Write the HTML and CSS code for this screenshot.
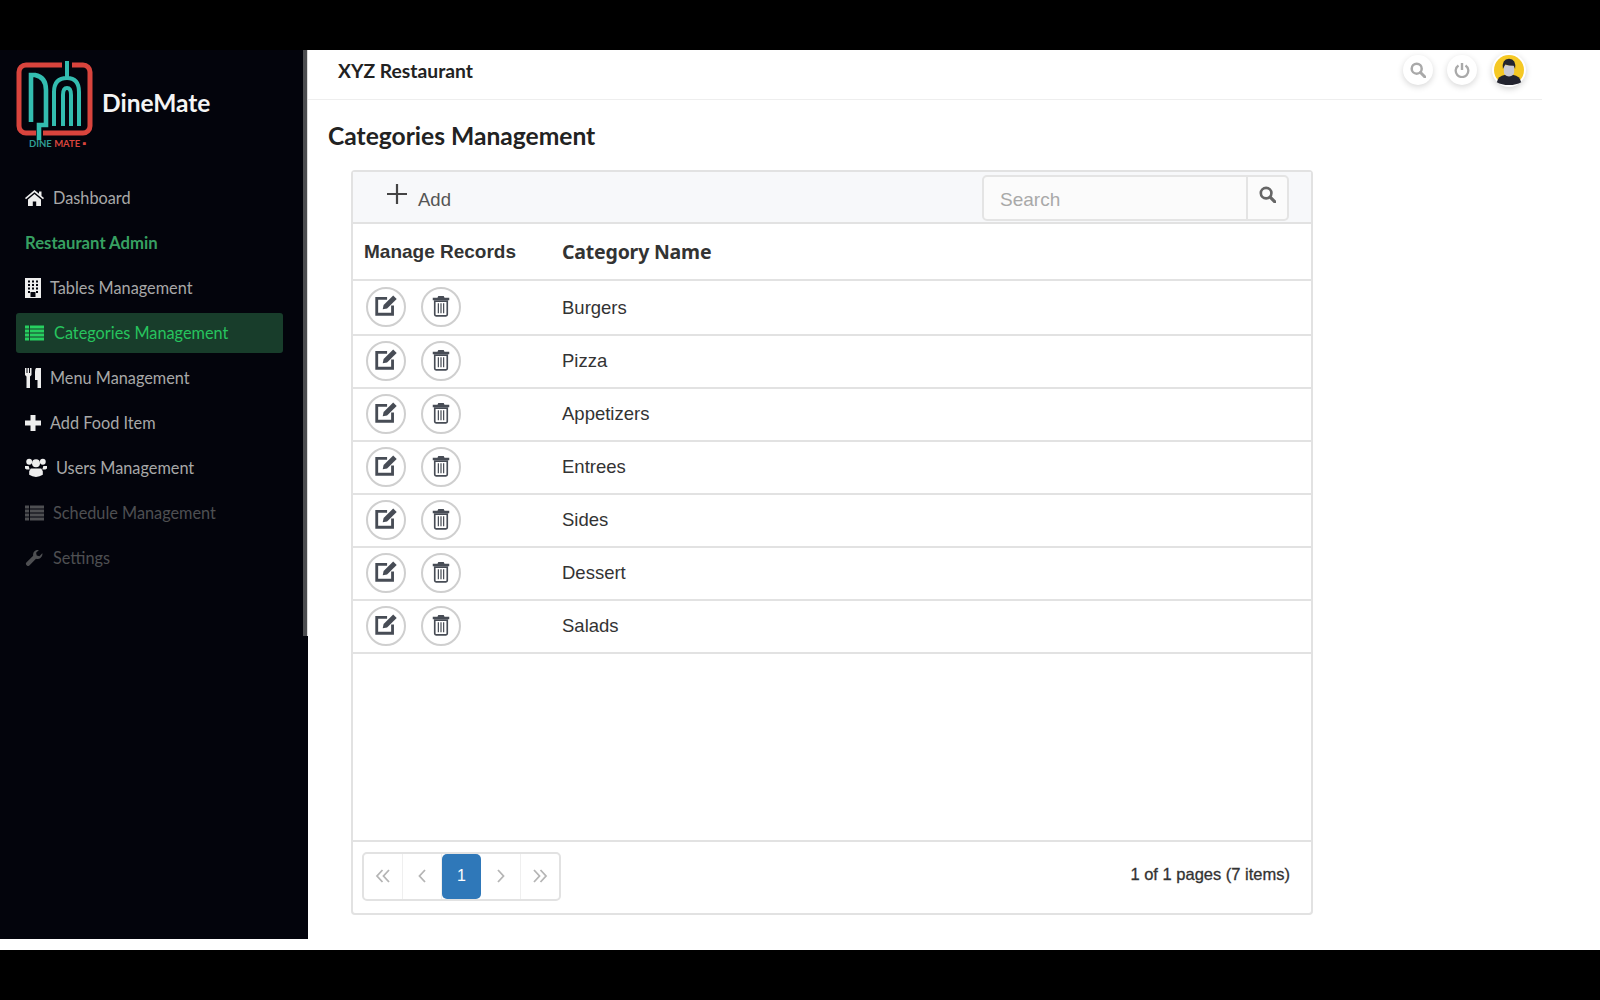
FILE: index.html
```html
<!DOCTYPE html>
<html lang="en">
<head>
<meta charset="utf-8">
<title>Categories Management</title>
<link rel="stylesheet" href="styles.css">
</head>
<body>
<svg class="defs" aria-hidden="true">
  <defs>
    <symbol id="i-edit" viewBox="0 0 22 22">
      <path d="M17 11.5V19.5H2.500V5H12" fill="none" stroke="currentColor" stroke-width="2.600"/>
      <path d="M8 15l.8-4 8.800-8.800 3.200 3.200-8.800 8.800z" fill="currentColor"/>
    </symbol>
    <symbol id="i-trash" viewBox="0 0 16 20">
      <path d="M5.500 1h5l.7 1.600H15.500v2.200H.5V2.600h4.300z" fill="currentColor"/>
      <path d="M2.300 5.600h11.400v12.200a1.200 1.200 0 0 1-1.200 1.200H3.500a1.200 1.200 0 0 1-1.200-1.200z" fill="none" stroke="currentColor" stroke-width="1.500"/>
      <path d="M5.600 7.500v9M8 7.500v9M10.400 7.500v9" stroke="currentColor" stroke-width="1.100"/>
    </symbol>
    <symbol id="i-list" viewBox="0 0 19 15">
      <path d="M0 0h4v3H0zM5 0h14v3H5zM0 4h4v3H0zM5 4h14v3H5zM0 8h4v3H0zM5 8h14v3H5zM0 12h4v3H0zM5 12h14v3H5z" fill="currentColor"/>
    </symbol>
    <symbol id="i-search" viewBox="0 0 16 16">
      <circle cx="6.700" cy="6.700" r="5" fill="none" stroke="currentColor" stroke-width="2.500"/>
      <path d="M10.500 10.500L15 15" stroke="currentColor" stroke-width="3" stroke-linecap="round"/>
    </symbol>
  </defs>
</svg>
<div class="band"></div>
<div class="app">
  <aside class="sidebar">
    <span class="rail"></span>
    <div class="brand">
      <svg class="logo" viewBox="16 10 80 88">
        <path d="M62 15H26a7 7 0 0 0-7 7V76a7 7 0 0 0 7 7H36M72 15H83a7 7 0 0 1 7 7V76a7 7 0 0 1-7 7H43" fill="none" stroke="#d9443d" stroke-width="5"/>
        <path d="M31 72V25H35Q46 27 46 40V75H39V90" fill="none" stroke="#33bdb0" stroke-width="4.600"/>
        <path d="M67 11V28M54 76V42Q54 28 67 28Q79 28 79 42V76M63 76V45Q63 38 67 38Q71 38 71 45V76" fill="none" stroke="#33bdb0" stroke-width="4"/>
        <text x="29" y="97" class="logo-text"><tspan fill="#2f9d94">DINE </tspan><tspan fill="#d9443d">MATE ▪</tspan></text>
      </svg>
      <span class="brand-name">DineMate</span>
    </div>
    <ul class="nav">
      <li class="nav-item"><a class="nav-link">
        <svg class="ic ic-19" viewBox="0 0 19 16"><path d="M9.500 0L14 3.800V1.500h2.500v4.400L19 8l-1 1.200-8.500-7-8.500 7L0 8zM3 9.500l6.500-5.400L16 9.500V16h-4.800v-4.500H7.800V16H3z" fill="currentColor"/></svg>
        <span>Dashboard</span></a></li>
      <li class="nav-item nav-heading"><span>Restaurant Admin</span></li>
      <li class="nav-item"><a class="nav-link">
        <svg class="ic ic-16" viewBox="0 0 16 20"><path fill-rule="evenodd" d="M0 0h16v20H0zM3 2.500v2h2v-2zM7 2.500v2h2v-2zM11 2.500v2h2v-2zM3 6v2h2V6zM7 6v2h2V6zM11 6v2h2V6zM3 9.500v2h2v-2zM7 9.500v2h2v-2zM11 9.500v2h2v-2zM3 13v2h2v-2zM11 13v2h2v-2zM5.500 14v5h5v-5z" fill="currentColor"/></svg>
        <span>Tables Management</span></a></li>
      <li class="nav-item"><a class="nav-link is-active">
        <svg class="ic ic-19"><use href="#i-list"/></svg>
        <span>Categories Management</span></a></li>
      <li class="nav-item"><a class="nav-link">
        <svg class="ic ic-16" viewBox="0 0 16 20"><path d="M0 0h1.500v5h1V0H4v5h1V0h1.500v7L5 8.500V20H1.500V8.500L0 7zM11 0h5v20h-3.500v-8H10V4q0-3 1-4z" fill="currentColor"/></svg>
        <span>Menu Management</span></a></li>
      <li class="nav-item"><a class="nav-link">
        <svg class="ic ic-16" viewBox="0 0 16 16"><path d="M5.500 0h5v5.500H16v5h-5.500V16h-5v-5.500H0v-5h5.500z" fill="currentColor"/></svg>
        <span>Add Food Item</span></a></li>
      <li class="nav-item"><a class="nav-link">
        <svg class="ic ic-21" viewBox="0 0 21 18"><circle cx="4" cy="3.500" r="2.800" fill="currentColor"/><circle cx="17" cy="3.500" r="2.800" fill="currentColor"/><circle cx="10.500" cy="5" r="3.800" fill="currentColor"/><path d="M0 7.500h3.500L4.500 11H1.500L0 10zM21 7.500h-3.500L16.500 11h3l1.500-1zM5.500 10h10l1.500 2.500V16q-3 2-6.500 2T4 16v-3.500z" fill="currentColor"/></svg>
        <span>Users Management</span></a></li>
      <li class="nav-item is-muted"><a class="nav-link">
        <svg class="ic ic-19"><use href="#i-list"/></svg>
        <span>Schedule Management</span></a></li>
      <li class="nav-item is-muted"><a class="nav-link">
        <svg class="ic ic-19" viewBox="0 0 19 18"><path d="M18.500 4.500a5.500 5.500 0 0 1-7.300 5.300L4 17.200a2.400 2.400 0 0 1-3.400-3.400L8 6.500A5.500 5.500 0 0 1 14.500 0l-3.200 3.200.7 3 3 .7 3.200-3.200z" fill="currentColor"/></svg>
        <span>Settings</span></a></li>
    </ul>
  </aside>
  <main class="content">
    <header class="topbar">
      <span class="restaurant">XYZ Restaurant</span>
      <div class="top-actions">
        <span class="round-btn"><svg class="top-ic"><use href="#i-search"/></svg></span>
        <span class="round-btn"><svg class="top-ic" viewBox="0 0 16 16"><path d="M4.500 3.500a6.300 6.300 0 1 0 7 0" fill="none" stroke="currentColor" stroke-width="2.300"/><path d="M8 1v7" stroke="currentColor" stroke-width="2.400"/></svg></span>
        <span class="avatar"><svg viewBox="0 0 32 32" class="avatar-img">
          <circle cx="16" cy="16" r="16" fill="#f5c824"/>
          <path d="M3 29q1-6.500 9-8h8q8 1.500 9 8-5 3-13 3T3 29z" fill="#23242f"/>
          <path d="M10.500 11h11v7q0 4-5.500 5-5.500-1-5.500-5z" fill="#c9cad6"/>
          <path d="M9.500 15Q8 4.500 16 4q8 .5 6.500 11l-1.500-3.500q-5 0-9-1.500z" fill="#23242f"/>
        </svg></span>
      </div>
    </header>
    <h1 class="page-title">Categories Management</h1>
    <section class="panel">
      <div class="toolbar">
        <a class="add-btn"><svg class="add-ic" viewBox="0 0 20 20"><path d="M10 0v20M0 10h20" stroke="currentColor" stroke-width="2.200"/></svg><span class="add-label">Add</span></a>
        <div class="search">
          <span class="search-input">Search</span>
          <span class="search-btn"><svg class="search-ic"><use href="#i-search"/></svg></span>
        </div>
      </div>
      <div class="grid-body">
        <table class="records">
          <thead>
            <tr><th class="col-manage">Manage Records</th><th class="col-name">Category Name</th></tr>
          </thead>
          <tbody>
            <tr class="row-a"><td><div class="actions"><span class="circle"><svg class="edit-ic"><use href="#i-edit"/></svg></span><span class="circle"><svg class="trash-ic"><use href="#i-trash"/></svg></span></div></td><td>Burgers</td></tr>
            <tr><td><div class="actions"><span class="circle"><svg class="edit-ic"><use href="#i-edit"/></svg></span><span class="circle"><svg class="trash-ic"><use href="#i-trash"/></svg></span></div></td><td>Pizza</td></tr>
            <tr><td><div class="actions"><span class="circle"><svg class="edit-ic"><use href="#i-edit"/></svg></span><span class="circle"><svg class="trash-ic"><use href="#i-trash"/></svg></span></div></td><td>Appetizers</td></tr>
            <tr><td><div class="actions"><span class="circle"><svg class="edit-ic"><use href="#i-edit"/></svg></span><span class="circle"><svg class="trash-ic"><use href="#i-trash"/></svg></span></div></td><td>Entrees</td></tr>
            <tr><td><div class="actions"><span class="circle"><svg class="edit-ic"><use href="#i-edit"/></svg></span><span class="circle"><svg class="trash-ic"><use href="#i-trash"/></svg></span></div></td><td>Sides</td></tr>
            <tr><td><div class="actions"><span class="circle"><svg class="edit-ic"><use href="#i-edit"/></svg></span><span class="circle"><svg class="trash-ic"><use href="#i-trash"/></svg></span></div></td><td>Dessert</td></tr>
            <tr><td><div class="actions"><span class="circle"><svg class="edit-ic"><use href="#i-edit"/></svg></span><span class="circle"><svg class="trash-ic"><use href="#i-trash"/></svg></span></div></td><td>Salads</td></tr>
          </tbody>
        </table>
      </div>
      <div class="pager">
        <div class="pages">
          <span class="page-cell"><svg class="pg-ic" viewBox="0 0 16 14"><path d="M7.500 1L2 7l5.500 6M14 1L8.500 7l5.500 6" fill="none" stroke="currentColor" stroke-width="1.800"/></svg></span>
          <span class="page-cell"><svg class="pg-ic" viewBox="0 0 16 14"><path d="M11 1L5.500 7l5.500 6" fill="none" stroke="currentColor" stroke-width="1.800"/></svg></span>
          <span class="page-cell is-current">1</span>
          <span class="page-cell no-line"><svg class="pg-ic" viewBox="0 0 16 14"><path d="M5 1l5.500 6L5 13" fill="none" stroke="currentColor" stroke-width="1.800"/></svg></span>
          <span class="page-cell no-line"><svg class="pg-ic" viewBox="0 0 16 14"><path d="M2 1l5.500 6L2 13M8.500 1L14 7l-5.500 6" fill="none" stroke="currentColor" stroke-width="1.800"/></svg></span>
        </div>
        <span class="page-info">1 of 1 pages (7 items)</span>
      </div>
    </section>
  </main>
</div>
<div class="band"></div>
</body>
</html>
```

FILE: styles.css
```css
* { box-sizing: border-box; }
html, body { margin: 0; padding: 0; height: 1000px; overflow: hidden; background: #fff; }
body { font-family: "Liberation Sans", Arial, sans-serif; color: #333; }
.defs { display: none; }
.band { height: 50px; background: #000; }
.app { display: flex; height: 900px; align-items: flex-start; }

/* sidebar */
.sidebar { position: relative; flex: 0 0 308px; height: 889px; background: #03040c; font-family: Lato, sans-serif; }
.rail { position: absolute; top: 0; right: 0; width: 5px; height: 586px; background: #4c4d50; border-right: 1px solid #dcdcdc; }
.brand { display: flex; align-items: center; height: 125px; padding: 10px 0 27px 16px; }
.logo { display: block; width: 80px; height: 88px; flex: none; }
.logo-text { font: 700 9.500px Lato, sans-serif; }
.brand-name { margin-left: 6px; margin-top: -4px; font-size: 24.500px; font-weight: 700; color: #f4f4f4; }
.nav { list-style: none; margin: 0; padding: 0; }
.nav-item { display: flex; align-items: center; height: 45px; font-size: 16.300px; color: #a8a8a8; }
.nav-heading { padding-left: 25px; font-size: 16.700px; color: #37a062; font-weight: 700; }
.nav-link { display: flex; align-items: center; gap: 9px; width: 267px; height: 40px; margin-left: 16px; padding-left: 9px; border-radius: 3px; }
.is-active { gap: 10px; background: #183d2b; color: #27c45e; }
.is-active .ic { color: #27d060; }
.ic { flex: none; color: #eeeeee; }
.ic-16 { width: 16px; height: 20px; }
.ic-19 { width: 19px; height: 16px; }
.ic-21 { width: 22px; height: 19px; }
.is-muted { color: #4e4f52; }
.is-muted .ic { color: #4e4f52; }

/* main */
.content { flex: 0 0 1234px; }
.topbar { display: flex; align-items: center; justify-content: space-between; height: 50px; padding: 0 16px 9px 30px; border-bottom: 1px solid #eeeeee; }
.restaurant { font: 700 19.300px Lato, sans-serif; color: #222; }
.top-actions { display: flex; align-items: center; gap: 14px; }
.round-btn { display: flex; align-items: center; justify-content: center; width: 30px; height: 30px; border-radius: 50%; background: #fff; box-shadow: 0 2px 6px rgba(0,0,0,.16); color: #a9a9a9; }
.top-ic { width: 16px; height: 16px; }
.avatar { width: 34px; height: 34px; margin-left: 1px; padding: 2px; border-radius: 50%; background: #fff; box-shadow: 0 2px 6px rgba(0,0,0,.18); }
.avatar-img { display: block; width: 30px; height: 30px; }
.page-title { margin: 21px 0 19px 20px; font: 700 24.600px/30px Lato, sans-serif; color: #222; }

/* panel */
.panel { display: flex; flex-direction: column; width: 962px; height: 745px; margin-left: 43px; border: 2px solid #e2e2e2; border-radius: 4px; background: #fff; }
.toolbar { display: flex; align-items: center; justify-content: space-between; flex: none; height: 52px; padding: 2px 22px 0 34px; background: #f7f8fa; border-bottom: 2px solid #e2e2e2; }
.add-btn { display: flex; align-items: center; gap: 11px; font-size: 18.500px; color: #555; }
.add-ic { width: 20px; height: 20px; margin-top: -8px; color: #444; }
.add-label { padding-top: 4px; }
.search { display: flex; width: 307px; height: 46px; border: 2px solid #e4e4e4; border-radius: 5px; background: #fbfbfb; }
.search-input { flex: 1; padding: 12px 16px 0; font-size: 19px; color: #a9a9a9; }
.search-btn { display: flex; justify-content: center; width: 41px; padding-top: 9px; border-left: 2px solid #e4e4e4; color: #666; }
.search-ic { width: 17px; height: 17px; }
.grid-body { flex: 1; }
.records { width: 100%; border-collapse: collapse; table-layout: fixed; }
.records th { height: 56px; padding: 0; text-align: left; color: #333; }
.col-manage { width: 209px; padding-left: 11px !important; font: 700 19px "Liberation Sans", sans-serif; }
.col-name { font: 700 19.500px "Noto Sans", sans-serif; letter-spacing: -.2px; }
.records tr { border-bottom: 2px solid #e2e2e2; }
.records td { height: 53px; padding: 0; font-size: 18.500px; color: #333; }
.records td + td { padding-bottom: 2px; }
.row-a td { height: 55px; }
.row-a td + td { padding-bottom: 0; }
.actions { display: flex; gap: 15px; margin-top: -2px; padding-left: 13px; }
.circle { display: flex; align-items: center; justify-content: center; width: 40px; height: 40px; border: 2px solid #cfcfcf; border-radius: 50%; color: #474c55; }
.edit-ic { width: 24px; height: 24px; margin-top: -3px; }
.trash-ic { width: 18px; height: 22px; margin-top: -2px; }

/* pager */
.pager { display: flex; align-items: center; justify-content: space-between; flex: none; height: 73px; padding: 0 21px 3px 9px; border-top: 2px solid #e2e2e2; }
.pages { display: flex; align-items: center; width: 199px; height: 49px; border: 2px solid #e2e2e2; border-radius: 5px; }
.page-cell { display: flex; align-items: center; justify-content: center; width: 39px; height: 45px; border-right: 1px solid #efefef; color: #b5b5b5; }
.no-line { border-right: 0; }
.no-line + .no-line { border-left: 1px solid #efefef; }
.is-current { border: 0; border-radius: 5px; background: #2f78b9; color: #fff; font-size: 16px; }
.pg-ic { width: 16px; height: 14px; }
.page-info { margin-top: -3px; font-size: 16.500px; color: #333; -webkit-text-stroke: 0.3px #333; }
```
